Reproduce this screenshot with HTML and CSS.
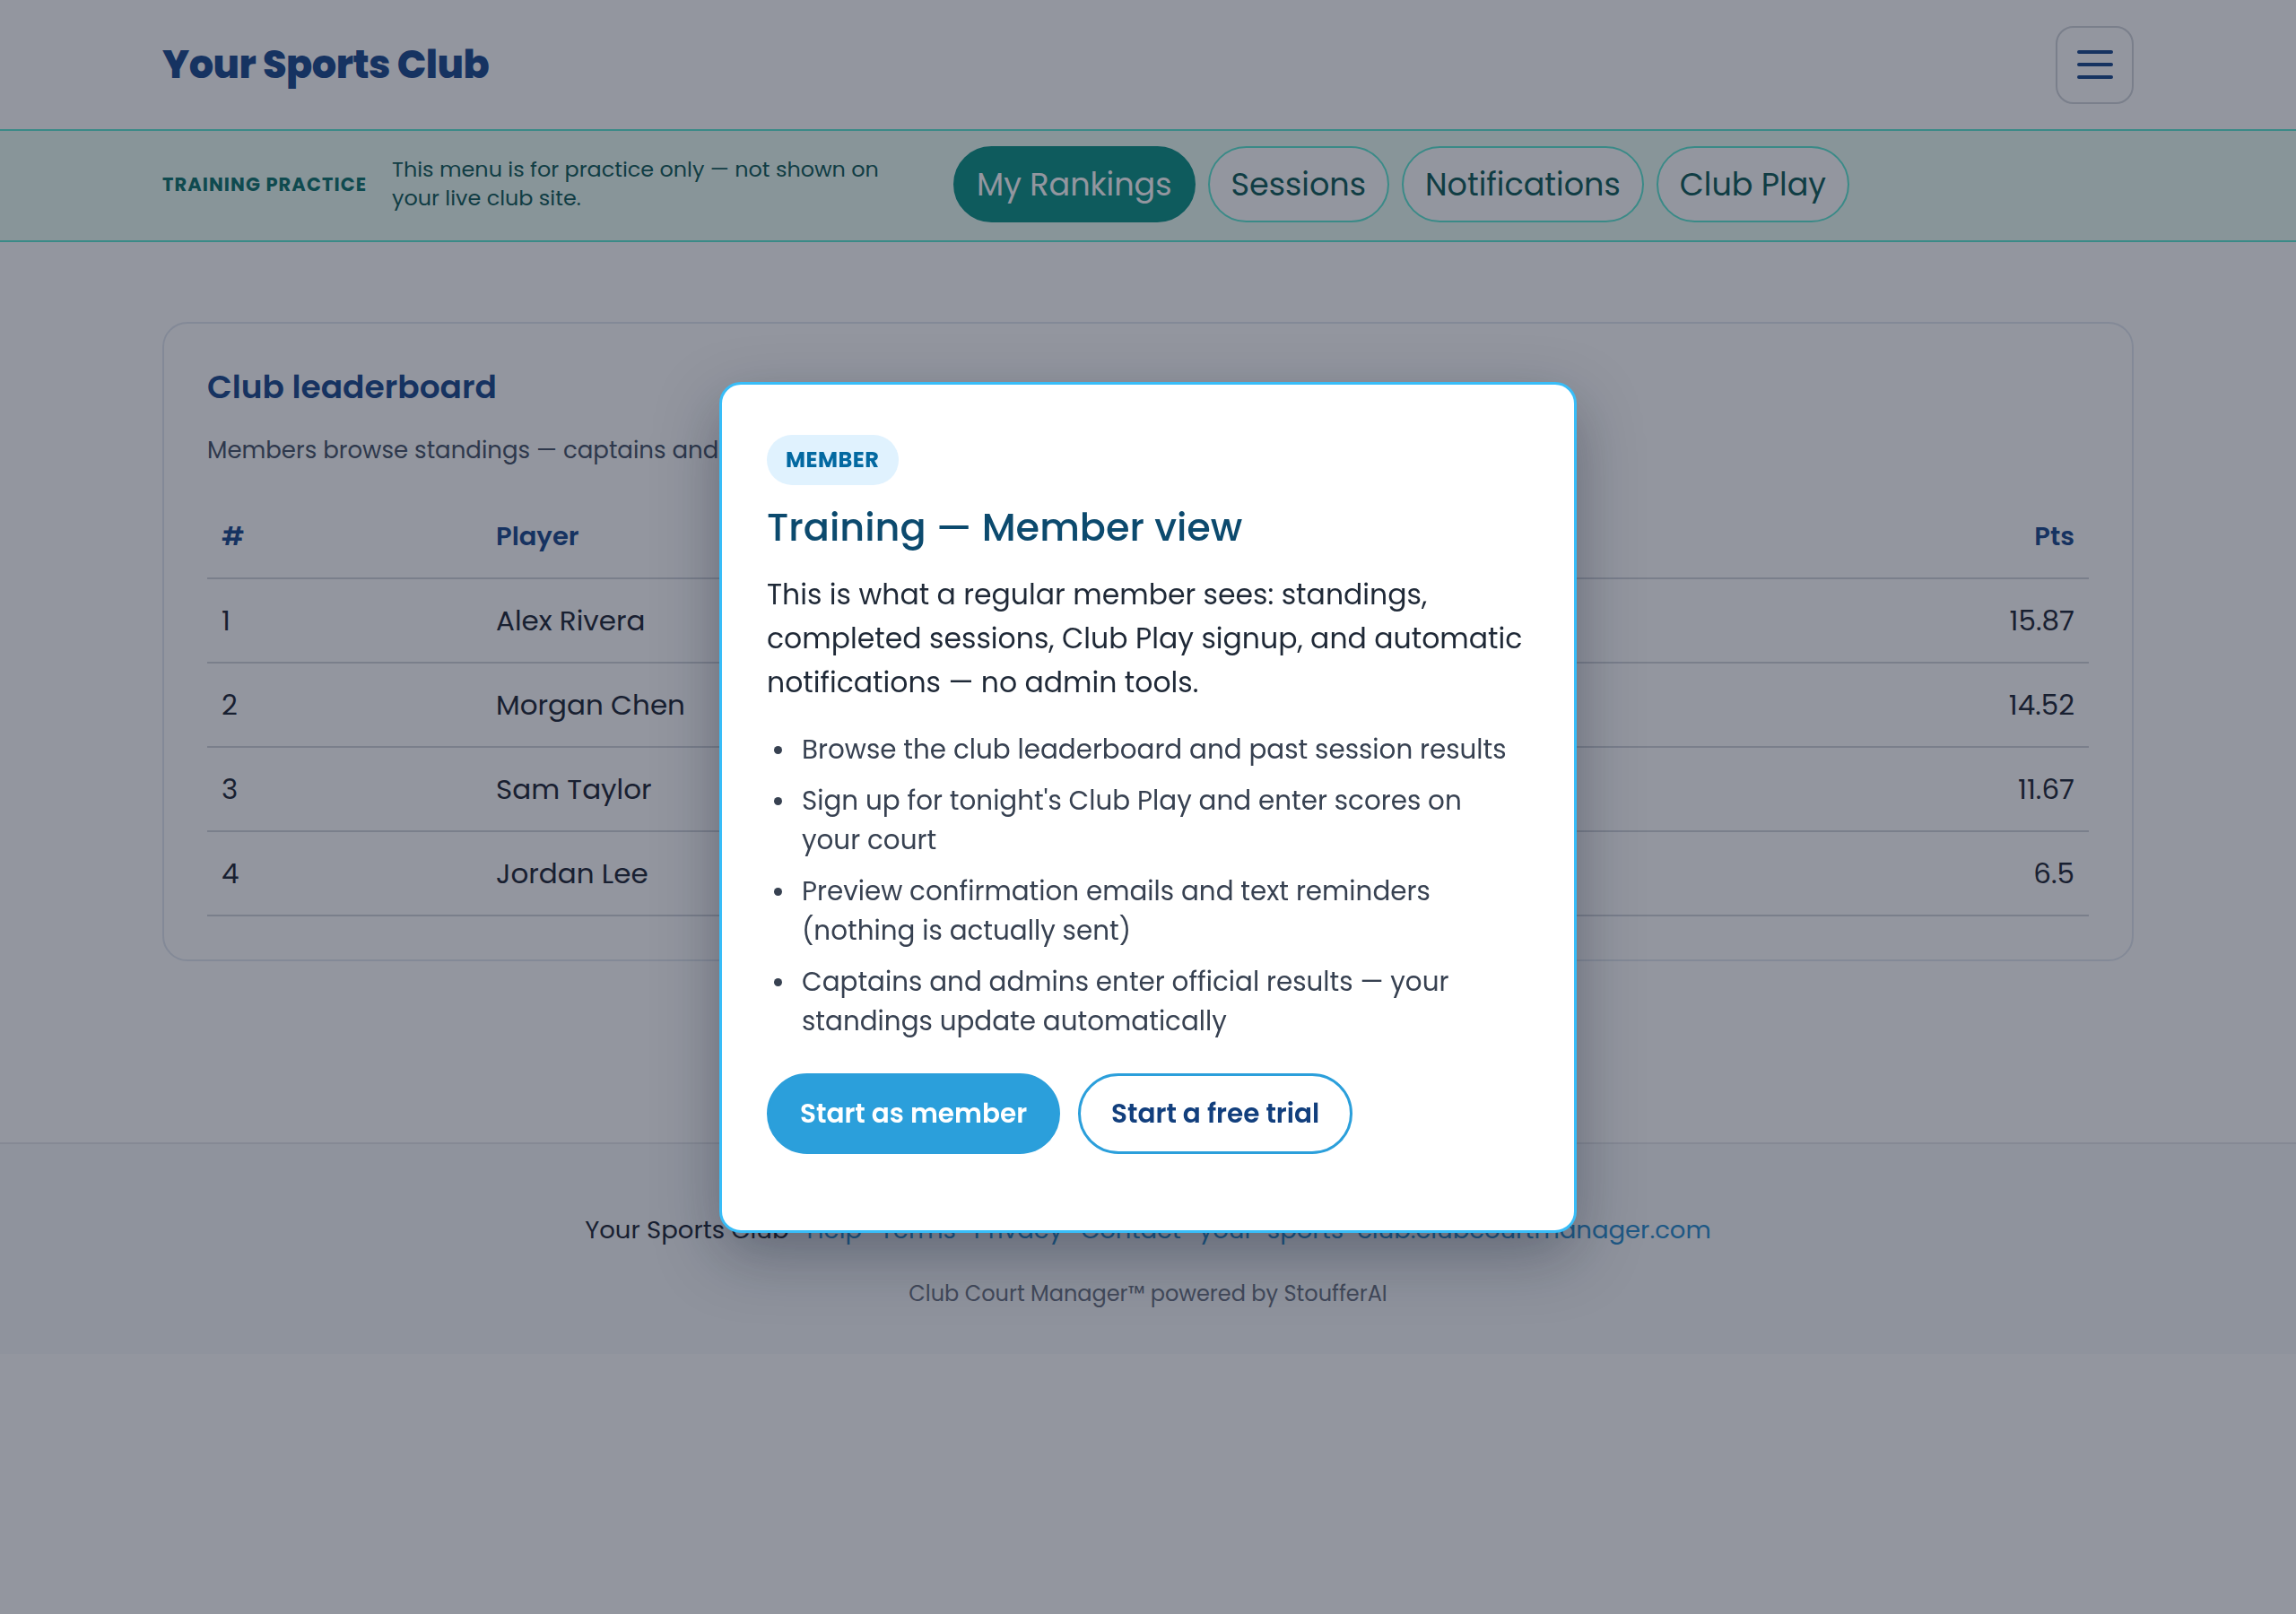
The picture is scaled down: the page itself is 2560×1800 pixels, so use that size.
FILE: index.html
```html
<!DOCTYPE html>
<html lang="en">
<head>
    <meta charset="UTF-8">
    <meta name="viewport" content="width=device-width, initial-scale=1.0">
    <title>Your Sports Club - Training</title>
    <link rel="stylesheet" href="styles.css">
</head>
<body>
    <header class="site-header">
        <div class="wrap header-row">
            <a class="brand" href="#">Your Sports Club</a>
            <button class="menu-btn" aria-label="Menu">
                <svg width="40" height="32" viewBox="0 0 40 32">
                    <line x1="2" y1="2" x2="38" y2="2" />
                    <line x1="2" y1="16" x2="38" y2="16" />
                    <line x1="2" y1="30" x2="38" y2="30" />
                </svg>
            </button>
        </div>
    </header>

    <div class="practice-bar">
        <div class="wrap practice-row">
            <span class="practice-label">TRAINING PRACTICE</span>
            <p class="practice-note">This menu is for practice only — not shown on your live club site.</p>
            <nav class="pills">
                <a class="pill active" href="#">My Rankings</a>
                <a class="pill" href="#">Sessions</a>
                <a class="pill" href="#">Notifications</a>
                <a class="pill" href="#">Club Play</a>
            </nav>
        </div>
    </div>

    <main class="wrap main">
        <section class="card">
            <h2>Club leaderboard</h2>
            <p class="sub">Members browse standings — captains and</p>
            <table class="board">
                <thead>
                    <tr><th class="col-rank">#</th><th>Player</th><th class="num">Pts</th></tr>
                </thead>
                <tbody>
                    <tr><td>1</td><td>Alex Rivera</td><td class="num">15.87</td></tr>
                    <tr><td>2</td><td>Morgan Chen</td><td class="num">14.52</td></tr>
                    <tr><td>3</td><td>Sam Taylor</td><td class="num">11.67</td></tr>
                    <tr><td>4</td><td>Jordan Lee</td><td class="num">6.5</td></tr>
                </tbody>
            </table>
        </section>
    </main>

    <footer class="site-footer">
        <div class="foot-links">
            <span>Your Sports Club</span>
            <a href="#">Help</a>
            <a href="#">Terms</a>
            <a href="#">Privacy</a>
            <a href="#">Contact</a>
            <a href="#">your-sports-club.clubcourtmanager.com</a>
        </div>
        <p class="powered">Club Court Manager™ powered by StoufferAI</p>
    </footer>

    <div class="backdrop">
        <div class="modal">
            <span class="badge">MEMBER</span>
            <h1>Training — Member view</h1>
            <p class="lead">This is what a regular member sees: standings, completed sessions, Club Play signup, and automatic notifications — no admin tools.</p>
            <ul class="points">
                <li>Browse the club leaderboard and past session results</li>
                <li>Sign up for tonight's Club Play and enter scores on your court</li>
                <li>Preview confirmation emails and text reminders (nothing is actually sent)</li>
                <li>Captains and admins enter official results — your standings update automatically</li>
            </ul>
            <div class="actions">
                <button class="btn primary">Start as member</button>
                <button class="btn outline">Start a free trial</button>
            </div>
        </div>
    </div>
</body>
</html>
```

FILE: styles.css
```css
* {
    margin: 0;
    padding: 0;
    box-sizing: border-box;
}

body {
    font-family: "Poppins", Inter, "Noto Sans", sans-serif;
    background-color: #fff;
    color: #1f2937;
}

a {
    text-decoration: none;
}

.wrap {
    width: 2198px;
    margin: 0 auto;
}

/* header */
.header-row {
    display: flex;
    align-items: center;
    justify-content: space-between;
    height: 144px;
}

.brand {
    font-size: 43px;
    font-weight: 800;
    letter-spacing: -0.5px;
    color: #1d4b8f;
}

.menu-btn {
    width: 87px;
    height: 87px;
    border: 2px solid #d1d5db;
    border-radius: 20px;
    background: #fff;
    display: flex;
    align-items: center;
    justify-content: center;
}

.menu-btn line {
    stroke: #1d4b8f;
    stroke-width: 4;
    stroke-linecap: round;
}

/* practice bar */
.practice-bar {
    background-color: #ecfdf5;
    border-top: 2px solid #5eead4;
    border-bottom: 2px solid #5eead4;
}

.practice-row {
    display: flex;
    align-items: center;
    height: 122px;
    padding-bottom: 4px;
}

.practice-label {
    font-size: 21px;
    font-weight: 700;
    letter-spacing: 0.05em;
    color: #0f766e;
    width: 256px;
}

.practice-note {
    font-size: 23.9px;
    line-height: 32px;
    color: #115e59;
    width: 575px;
}

.pills {
    display: flex;
    gap: 14px;
    margin-left: 51px;
}

.pill {
    font-size: 35px;
    line-height: 41px;
    padding: 20px 24px;
    border: 2px solid #5eead4;
    border-radius: 999px;
    background: #fff;
    color: #115e59;
}

.pill.active {
    background: #0d9488;
    border-color: #0d9488;
    color: #fff;
}

/* main */
.main {
    padding: 89px 0 202px;
}

.card {
    border: 2px solid #e2e8f0;
    border-radius: 28px;
    padding: 48px;
}

.card h2 {
    font-size: 36px;
    font-weight: 600;
    line-height: 46px;
    color: #1d4b8f;
}

.sub {
    margin-top: 28px;
    font-size: 26px;
    line-height: 39px;
    color: #475569;
}

.board {
    width: 100%;
    margin-top: 31px;
    border-collapse: collapse;
}

.board th,
.board td {
    text-align: left;
    padding: 0 16px;
    height: 94px;
    border-bottom: 2px solid #d1d5db;
}

.board th {
    font-size: 29px;
    font-weight: 600;
    color: #1d4b8f;
    height: 92px;
}

.board td {
    font-size: 31px;
    color: #1f2937;
}

.board .col-rank {
    width: 306px;
}

.board .num {
    text-align: right;
}

/* footer */
.site-footer {
    border-top: 2px solid #e5e7eb;
    background-color: #f8fafc;
    padding: 76px 0 50px;
    text-align: center;
}

.foot-links {
    display: flex;
    justify-content: center;
    gap: 20px;
    font-size: 27.5px;
    line-height: 40px;
    color: #1f2937;
}

.foot-links a {
    color: #2b8fcf;
}

.powered {
    margin-top: 34px;
    font-size: 24px;
    line-height: 34px;
    color: #6b7280;
}

/* modal */
.backdrop {
    position: fixed;
    inset: 0;
    background-color: rgba(15, 23, 42, 0.45);
    display: flex;
    align-items: center;
    justify-content: center;
}

.modal {
    width: 956px;
    background: #fff;
    border: 3px solid #38bdf8;
    border-radius: 24px;
    padding: 56px 50px 85px;
    box-shadow: 0 25px 70px rgba(15, 23, 42, 0.35);
}

.badge {
    display: inline-block;
    background-color: #e0f2fe;
    color: #0369a1;
    font-size: 24px;
    font-weight: 700;
    letter-spacing: 0.5px;
    line-height: 56px;
    padding: 0 21px;
    border-radius: 28px;
}

.modal h1 {
    margin-top: 21px;
    font-size: 43px;
    font-weight: 500;
    line-height: 53px;
    color: #0c4a6e;
}

.lead {
    margin-top: 24px;
    font-size: 31.5px;
    line-height: 49px;
    color: #1f2937;
}

.points {
    list-style: none;
    margin-top: 28px;
    padding-right: 12px;
    font-size: 29.4px;
    line-height: 44px;
    color: #374151;
}

.points li {
    display: flex;
    gap: 22px;
    padding-left: 8px;
}

.points li::before {
    content: "";
    flex: none;
    width: 9px;
    height: 9px;
    margin-top: 18px;
    border-radius: 50%;
    background-color: #374151;
}

.points li + li {
    margin-top: 13px;
}

.actions {
    display: flex;
    gap: 20px;
    margin-top: 36px;
}

.btn {
    font-family: inherit;
    font-size: 29.5px;
    font-weight: 600;
    height: 90px;
    padding: 0 34px;
    border-radius: 999px;
    cursor: pointer;
}

.btn.primary {
    background-color: #2b9fdb;
    border: 3px solid #2b9fdb;
    color: #fff;
}

.btn.outline {
    background-color: #fff;
    border: 3px solid #2b9fdb;
    color: #123f7d;
}
```
